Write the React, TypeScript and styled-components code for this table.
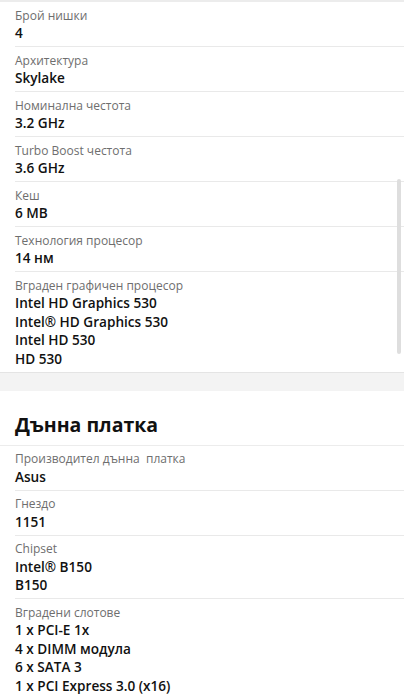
import React from "react";
import styled, { createGlobalStyle } from "styled-components";

const Global = createGlobalStyle`
  html, body { margin: 0; padding: 0; background: #fff; }
  body { font-family: "Open Sans", "Noto Sans", sans-serif; -webkit-font-smoothing: antialiased; }
  * { box-sizing: border-box; }
`;

const Page = styled.div`
  position: relative;
  width: 404px;
  height: 700px;
  overflow: hidden;
  background: #fff;
  border-top: 2px solid #ececec;
`;

const Section = styled.section`
  background: #fff;
`;

const Gap = styled.div`
  height: 19px;
  background: #f3f3f3;
  border-top: 1px solid #e4e4e4;
`;

const Heading = styled.h2`
  margin: 0;
  padding: 21px 15px 7px;
  font-size: 19.5px;
  line-height: 26px;
  font-weight: 700;
  color: #111;
  border-bottom: 1px solid #ececec;
`;

const Row = styled.div<{ $last?: boolean }>`
  margin-left: 15px;
  padding: 5.5px 0 3.5px;
  border-bottom: ${(p) => (p.$last ? "none" : "1px solid #e9e9e9")};
`;

const Label = styled.div`
  font-size: 12px;
  line-height: 16.5px;
  color: #6e6e6e;
  white-space: pre;
`;

const Value = styled.div`
  font-size: 13.6px;
  line-height: 18.5px;
  font-weight: 600;
  color: #111;
`;

const ScrollThumb = styled.div`
  position: absolute;
  left: 397px;
  top: 177px;
  width: 4px;
  height: 175px;
  border-radius: 2px;
  background: #dedede;
`;

type Spec = { label: string; values: string[] };

const cpu: Spec[] = [
  { label: "Брой нишки", values: ["4"] },
  { label: "Архитектура", values: ["Skylake"] },
  { label: "Номинална честота", values: ["3.2 GHz"] },
  { label: "Turbo Boost честота", values: ["3.6 GHz"] },
  { label: "Кеш", values: ["6 MB"] },
  { label: "Технология процесор", values: ["14 нм"] },
  {
    label: "Вграден графичен процесор",
    values: ["Intel HD Graphics 530", "Intel® HD Graphics 530", "Intel HD 530", "HD 530"],
  },
];

const board: Spec[] = [
  { label: "Производител дънна  платка", values: ["Asus"] },
  { label: "Гнездо", values: ["1151"] },
  { label: "Chipset", values: ["Intel® B150", "B150"] },
  {
    label: "Вградени слотове",
    values: ["1 x PCI-E 1x", "4 x DIMM модула", "6 x SATA 3", "1 x PCI Express 3.0 (x16)"],
  },
];

const Rows = ({ items }: { items: Spec[] }) => (
  <>
    {items.map((s, i) => (
      <Row key={s.label} $last={i === items.length - 1}>
        <Label>{s.label}</Label>
        {s.values.map((v) => (
          <Value key={v}>{v}</Value>
        ))}
      </Row>
    ))}
  </>
);

export default function App() {
  return (
    <>
      <Global />
      <Page>
        <Section>
          <Rows items={cpu} />
        </Section>
        <Gap />
        <Section>
          <Heading>Дънна платка</Heading>
          <Rows items={board} />
        </Section>
        <ScrollThumb />
      </Page>
    </>
  );
}
